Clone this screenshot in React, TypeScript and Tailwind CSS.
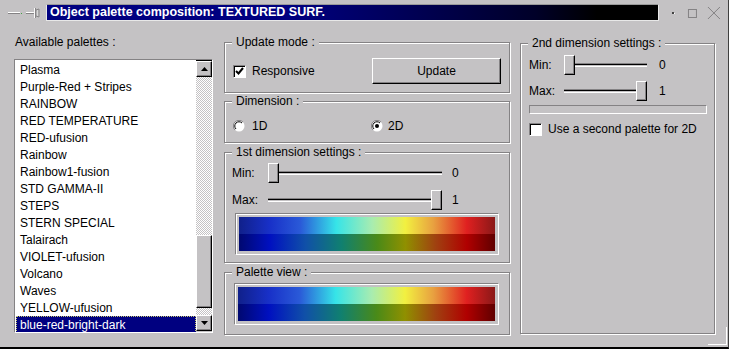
import React from "react";

const FONT = { fontFamily: '"Liberation Sans", Arial, sans-serif' };

const items = [
  "Plasma",
  "Purple-Red + Stripes",
  "RAINBOW",
  "RED TEMPERATURE",
  "RED-ufusion",
  "Rainbow",
  "Rainbow1-fusion",
  "STD GAMMA-II",
  "STEPS",
  "STERN SPECIAL",
  "Talairach",
  "VIOLET-ufusion",
  "Volcano",
  "Waves",
  "YELLOW-ufusion",
  "blue-red-bright-dark",
];

function Group({
  title,
  className,
  children,
}: {
  title: string;
  className: string;
  children?: React.ReactNode;
}) {
  return (
    <div
      className={
        "relative border border-[#848284] shadow-[inset_1px_1px_0_#fff,1px_1px_0_#fff] " +
        className
      }
    >
      <div className="absolute -top-[8px] left-[7px] bg-[#c4c2c4] px-[4px] text-[12px] leading-[14px] text-black">
        {title}
      </div>
      {children}
    </div>
  );
}

function Slider({
  label,
  value,
  trackW,
  right,
  labelW,
  gap,
}: {
  label: string;
  value: string;
  trackW: number;
  right: boolean;
  labelW: string;
  gap: string;
}) {
  return (
    <div className="flex h-[20px] items-center">
      <div className={"text-[12px] leading-[14px] " + labelW}>{label}</div>
      <div className="relative h-[20px]" style={{ width: trackW }}>
        <div className="absolute left-0 right-0 top-[8px] h-[4px] border-t border-[#848284] border-b border-b-white bg-[#000] shadow-[inset_0_1px_0_#000,inset_0_-1px_0_#c4c2c4]" />
        <div
          className={
            "absolute top-0 h-[20px] w-[11px] border border-t-white border-l-white border-r-black border-b-black bg-[#c4c2c4] shadow-[inset_-1px_-1px_0_#848284] " +
            (right ? "right-0" : "left-0")
          }
        />
      </div>
      <div className={"text-[12px] leading-[14px] " + gap}>{value}</div>
    </div>
  );
}

function GradientBox({ w }: { w: string }) {
  return (
    <div
      className={
        "h-[42px] border border-[#848284] border-b-white border-r-white bg-[#c4c2c4] p-[3px] shadow-[inset_1px_1px_0_#fff] " +
        w
      }
    >
      <div className="flex h-full w-full flex-col">
        <div className="h-1/2 w-full bg-[linear-gradient(to_right,#10208a_0%,#1830c8_12%,#2a5ad8_24%,#36e4e8_38%,#a8ecb0_52%,#f2f040_65%,#e8a040_76%,#e02020_89%,#8a1818_100%)]" />
        <div className="h-1/2 w-full bg-[linear-gradient(to_right,#000870_0%,#0010c0_12%,#1050a8_26%,#108070_40%,#4a8a18_54%,#909000_65%,#a04010_77%,#b00000_89%,#600000_100%)]" />
      </div>
    </div>
  );
}

function Checkbox({ checked }: { checked: boolean }) {
  return (
    <div className="flex h-[13px] w-[13px] items-center justify-center border border-[#848284] border-b-white border-r-white bg-white shadow-[inset_1px_1px_0_#000]">
      {checked && (
        <svg width="9" height="9" viewBox="0 0 9 9">
          <path d="M1 4 L3.5 6.5 L8 1" fill="none" stroke="#000" strokeWidth="2" />
        </svg>
      )}
    </div>
  );
}

function Radio({ checked }: { checked: boolean }) {
  return (
    <svg width="12" height="12" viewBox="0 0 12 12">
      <circle cx="6" cy="6" r="5.5" fill="#fff" />
      <path d="M10 2 A5.5 5.5 0 0 0 2 10" fill="none" stroke="#848284" strokeWidth="1" />
      <path d="M9 3 A4.2 4.2 0 0 0 3 9" fill="none" stroke="#000" strokeWidth="1" />
      {checked && <circle cx="6" cy="6" r="2" fill="#000" />}
    </svg>
  );
}

export default function App() {
  return (
    <div
      className="relative flex h-[349px] w-[729px] flex-col overflow-hidden bg-[#c4c2c4] text-black border-b-2 border-r border-b-black border-r-[#404040]"
      style={FONT}
    >
      {/* Title bar */}
      <div className="flex h-[22px] shrink-0 pt-[4px]">
        <svg width="46" height="17" viewBox="0 4 46 17">
          <rect x="8" y="12" width="12" height="1" fill="#fff" />
          <rect x="8" y="13" width="12" height="1" fill="#848284" />
          <rect x="21" y="13" width="1" height="1" fill="#40a040" />
          <rect x="26" y="12" width="8" height="1" fill="#fff" />
          <rect x="26" y="13" width="8" height="1" fill="#848284" />
          <rect x="34" y="8" width="2" height="10" fill="#848284" />
          <rect x="34" y="8" width="1" height="10" fill="#fff" />
          <path d="M36 10 L39 9 L39 17 L36 16 Z" fill="#d8d8d8" stroke="#848284" strokeWidth="1" />
        </svg>
        <div className="flex h-[17px] w-[614px] items-center border border-[#e8e8e8] border-t-[#9a9a9a] bg-[linear-gradient(to_right,#000080_0%,#000080_40%,#000028_80%,#000000_90%)] pl-[3px]">
          <span className="text-[12.5px] font-bold leading-[15px] text-white">
            Object palette composition: TEXTURED SURF.
          </span>
        </div>
        <svg width="69" height="17" viewBox="660 4 69 17">
          <rect x="673" y="12" width="2" height="2" fill="#404040" />
          <rect x="675" y="13" width="1" height="1" fill="#fff" />
          <rect x="689.5" y="9.5" width="8" height="8" fill="none" stroke="#848284" strokeWidth="1" />
          <path d="M709 7 L721 19 M721 7 L709 19" stroke="#848284" strokeWidth="1" />
        </svg>
      </div>

      {/* Body */}
      <div className="flex flex-1 pl-[14px]">
        {/* Left column */}
        <div className="flex w-[199px] flex-col">
          <div className="mt-[13px] pl-[1px] text-[12px] leading-[14px]">
            Available palettes :
          </div>
          <div className="mt-[10px] flex h-[274px] border border-[#848284] border-b-white border-r-white shadow-[inset_1px_1px_0_#000]">
            <div className="flex-1 overflow-hidden bg-white pl-[1px] pt-[1px]">
              {items.map((it, i) => {
                const sel = i === items.length - 1;
                return (
                  <div
                    key={it}
                    className={
                      "flex h-[17px] items-center pl-[4px] text-[12px] leading-[14px] " +
                      (sel
                        ? "bg-[#000080] text-white outline-1 outline-dotted outline-[#c8c870] -outline-offset-1"
                        : "")
                    }
                  >
                    {it}
                  </div>
                );
              })}
            </div>
            <div className="flex w-[16px] flex-col pt-[1px] pb-[1px]">
              <div className="flex h-[16px] items-center justify-center border border-t-white border-l-white border-r-black border-b-black bg-[#c4c2c4] shadow-[inset_-1px_-1px_0_#848284]">
                <svg width="7" height="4" viewBox="0 0 7 4">
                  <path d="M3.5 0 L7 4 L0 4 Z" fill="#000" />
                </svg>
              </div>
              <div className="h-[158px] bg-[repeating-conic-gradient(#c4c2c4_0_25%,#fff_0_50%)] bg-[length:2px_2px]" />
              <div className="h-[73px] border border-t-white border-l-white border-r-black border-b-black bg-[#c4c2c4] shadow-[inset_-1px_-1px_0_#848284]" />
              <div className="flex-1 bg-[repeating-conic-gradient(#c4c2c4_0_25%,#fff_0_50%)] bg-[length:2px_2px]" />
              <div className="flex h-[16px] items-center justify-center border border-t-white border-l-white border-r-black border-b-black bg-[#c4c2c4] shadow-[inset_-1px_-1px_0_#848284]">
                <svg width="7" height="4" viewBox="0 0 7 4">
                  <path d="M0 0 L7 0 L3.5 4 Z" fill="#000" />
                </svg>
              </div>
            </div>
          </div>
        </div>

        {/* Middle column */}
        <div className="ml-[11px] flex w-[286px] flex-col pt-[20px]">
          <Group title="Update mode :" className="h-[51px]">
            <div className="flex items-center pl-[8px] pr-[8px] pt-[15px]">
              <Checkbox checked />
              <span className="ml-[6px] text-[12px] leading-[14px]">Responsive</span>
              <div className="ml-auto flex h-[26px] w-[129px] items-center justify-center border border-t-white border-l-white border-r-black border-b-black bg-[#c4c2c4] text-[12px] shadow-[inset_-1px_-1px_0_#848284]">
                Update
              </div>
            </div>
          </Group>

          <Group title="Dimension :" className="mt-[8px] h-[42px]">
            <div className="flex items-center pl-[8px] pt-[17px]">
              <div className="flex w-[138px] items-center">
                <Radio checked={false} />
                <span className="ml-[7px] text-[12px] leading-[14px]">1D</span>
              </div>
              <div className="flex items-center">
                <Radio checked />
                <span className="ml-[5px] text-[12px] leading-[14px]">2D</span>
              </div>
            </div>
          </Group>

          <Group title="1st dimension settings :" className="mt-[9px] h-[111px]">
            <div className="flex flex-col pt-[10px]">
              <div className="pl-[7px]">
                <Slider label="Min:" value="0" trackW={174} right={false} labelW="w-[36px]" gap="ml-[10px]" />
              </div>
              <div className="mt-[7px] pl-[7px]">
                <Slider label="Max:" value="1" trackW={174} right labelW="w-[36px]" gap="ml-[10px]" />
              </div>
              <div className="mt-[3px] pl-[10px]">
                <GradientBox w="w-[264px]" />
              </div>
            </div>
          </Group>

          <Group title="Palette view :" className="mt-[9px] h-[63px]">
            <div className="pl-[9px] pt-[10px]">
              <GradientBox w="w-[265px]" />
            </div>
          </Group>
        </div>

        {/* Right column */}
        <div className="ml-[10px] flex w-[195px] flex-col pt-[21px]">
          <Group title="2nd dimension settings :" className="h-[291px]">
            <div className="flex flex-col pl-[8px] pt-[11px]">
              <Slider label="Min:" value="0" trackW={83} right={false} labelW="w-[35px]" gap="ml-[12px]" />
              <div className="mt-[6px]">
                <Slider label="Max:" value="1" trackW={83} right labelW="w-[35px]" gap="ml-[12px]" />
              </div>
              <div className="mt-[4px] h-[9px] w-[178px] border border-[#848284] border-b-white border-r-white" />
              <div className="mt-[8px] flex items-center">
                <Checkbox checked={false} />
                <span className="ml-[6px] text-[12px] leading-[14px]">
                  Use a second palette for 2D
                </span>
              </div>
            </div>
          </Group>
        </div>
      </div>

      {/* resize grip */}
      <div className="absolute bottom-[2px] right-[1px] h-[18px] w-[19px] border-r border-b border-white" />
    </div>
  );
}
